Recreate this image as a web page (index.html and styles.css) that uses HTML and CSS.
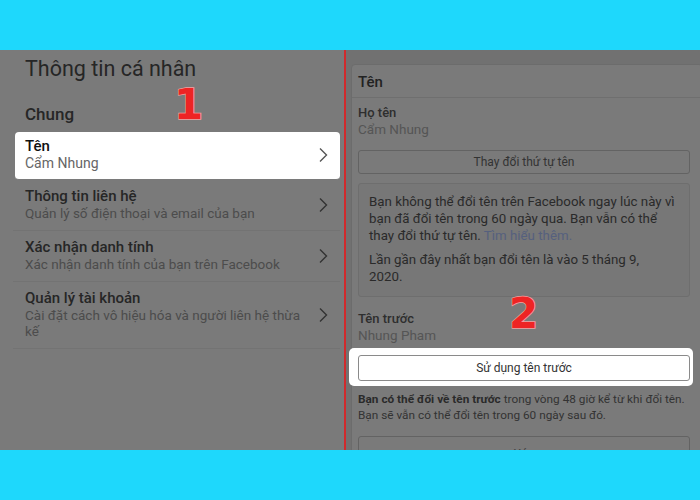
FILE: index.html
```html
<!DOCTYPE html>
<html lang="vi">
<head>
<meta charset="utf-8">
<title>Thông tin cá nhân</title>
<link rel="stylesheet" href="styles.css">
</head>
<body>
<div class="bar"></div>
<main class="screen">
  <section class="left">
    <h1 class="page-title">Thông tin cá nhân</h1>
    <h2 class="section-title">Chung</h2>
    <ul class="menu">
      <li class="menu-item active">
        <div class="item-text">
          <div class="item-title">Tên</div>
          <div class="item-sub">Cẩm Nhung</div>
        </div>
        <svg class="chev" viewBox="0 0 10 16"><path d="M2 1.5 L8.5 8 L2 14.5" fill="none" stroke="currentColor" stroke-width="1.4"/></svg>
      </li>
      <li class="menu-item">
        <div class="item-text">
          <div class="item-title">Thông tin liên hệ</div>
          <div class="item-sub">Quản lý số điện thoại và email của bạn</div>
        </div>
        <svg class="chev" viewBox="0 0 10 16"><path d="M2 1.5 L8.5 8 L2 14.5" fill="none" stroke="currentColor" stroke-width="1.4"/></svg>
      </li>
      <li class="menu-item">
        <div class="item-text">
          <div class="item-title">Xác nhận danh tính</div>
          <div class="item-sub">Xác nhận danh tính của bạn trên Facebook</div>
        </div>
        <svg class="chev" viewBox="0 0 10 16"><path d="M2 1.5 L8.5 8 L2 14.5" fill="none" stroke="currentColor" stroke-width="1.4"/></svg>
      </li>
      <li class="menu-item">
        <div class="item-text">
          <div class="item-title">Quản lý tài khoản</div>
          <div class="item-sub">Cài đặt cách vô hiệu hóa và người liên hệ thừa kế</div>
        </div>
        <svg class="chev" viewBox="0 0 10 16"><path d="M2 1.5 L8.5 8 L2 14.5" fill="none" stroke="currentColor" stroke-width="1.4"/></svg>
      </li>
    </ul>
    <span class="step step-1">1</span>
  </section>
  <section class="right">
    <div class="card">
      <div class="card-head">Tên</div>
      <div class="card-body">
        <div class="field-label">Họ tên</div>
        <div class="field-value">Cẩm Nhung</div>
        <div class="btn">Thay đổi thứ tự tên</div>
        <div class="notice">
          <p>Bạn không thể đổi tên trên Facebook ngay lúc này vì bạn đã đổi tên trong 60 ngày qua. Bạn vẫn có thể thay đổi thứ tự tên. <span class="link">Tìm hiểu thêm.</span></p>
          <p>Lần gần đây nhất bạn đổi tên là vào 5 tháng 9,<br>2020.</p>
        </div>
        <div class="field-label prev">Tên trước</div>
        <div class="field-value">Nhung Pham</div>
        <div class="highlight">
          <div class="btn btn-white">Sử dụng tên trước</div>
        </div>
        <p class="note"><b>Bạn có thể đổi về tên trước</b> trong vòng 48 giờ kể từ khi đổi tên. Bạn sẽ vẫn có thể đổi tên trong 60 ngày sau đó.</p>
        <div class="btn btn-last">Xóa</div>
      </div>
    </div>
    <span class="step step-2">2</span>
  </section>
</main>
<div class="bar"></div>
</body>
</html>
```
FILE: styles.css
```css
* { box-sizing: border-box; }
html, body { margin: 0; padding: 0; }
body {
  width: 700px;
  height: 500px;
  overflow: hidden;
  font-family: Roboto, "Liberation Sans", sans-serif;
  background: #7a7a7a;
}
.bar { height: 50px; background: #1ed8fc; }
.screen {
  height: 400px;
  display: flex;
  overflow: hidden;
}
.left {
  position: relative;
  width: 346px;
  flex: none;
  background: #7a7a7a;
  border-right: 2px solid #d02a2c;
  padding: 6px 4px 0 13px;
}
.page-title {
  margin: 0 0 0 12px;
  font-size: 21.5px;
  line-height: 25px;
  font-weight: 400;
  color: #262626;
}
.section-title {
  margin: 23px 0 0 12px;
  font-size: 17px;
  line-height: 20px;
  font-weight: 500;
  color: #262626;
}
.menu {
  list-style: none;
  margin: 8px 0 0;
  padding: 0;
}
.menu-item {
  display: flex;
  align-items: center;
  padding: 8px 12px 9px 12px;
  border-bottom: 1px solid #737373;
}
.menu-item.active {
  background: #fff;
  border-radius: 4px;
  margin-left: 2px;
  padding: 6px 12px 7px 10px;
  border-bottom: 1px solid #7a7a7a;
  height: 48px;
}
.item-text { flex: 1; }
.item-title {
  font-size: 15px;
  line-height: 17px;
  font-weight: 500;
  color: #262626;
}
.item-sub {
  font-size: 13.5px;
  line-height: 16px;
  color: #4c4c4c;
  padding-right: 8px;
}
.menu-item.active .item-title { color: #111; }
.menu-item.active .item-sub { color: #666; font-size: 14px; line-height: 17px; }
.chev {
  width: 10px;
  height: 16px;
  color: #333;
  flex: none;
}
.menu-item.active .chev { color: #555; }

.step {
  position: absolute;
  font-family: "DejaVu Sans", sans-serif;
  font-weight: 700;
  font-size: 42px;
  line-height: 42px;
  color: #ee2424;
  -webkit-text-stroke: 1.5px #f4a0a0;
  paint-order: stroke fill;
}
.step-1 { left: 174px; top: 34px; }
.step-2 { left: 163px; top: 243px; }

.right {
  position: relative;
  flex: 1;
  background: #717171;
  padding: 14px 0 0 5px;
  overflow: hidden;
}
.card {
  width: 352px;
  background: #7a7a7a;
  border: 1px solid #6c6c6c;
  border-radius: 4px;
}
.card-head {
  height: 33px;
  padding: 8px 6px 0;
  font-size: 15px;
  line-height: 18px;
  font-weight: 500;
  color: #222;
  border-bottom: 1px solid #6f6f6f;
}
.card-body {
  padding: 7px 12px 0 6px;
}
.field-label {
  font-size: 13px;
  line-height: 16px;
  font-weight: 500;
  color: #2e2e2e;
}
.field-value {
  font-size: 13.5px;
  line-height: 17px;
  color: #555;
}
.btn {
  height: 24px;
  margin-top: 12px;
  border: 1px solid #636363;
  border-radius: 3px;
  font-size: 12px;
  line-height: 22px;
  text-align: center;
  color: #333;
}
.notice {
  margin-top: 9px;
  border: 1px solid #6e6e6e;
  border-radius: 3px;
  background: #777;
  padding: 9px 6px 11px 10px;
  font-size: 13.3px;
  line-height: 17px;
  color: #2a2a2a;
}
.notice p { margin: 0; }
.notice p + p { margin-top: 7px; }
.link { color: #55607e; }
.field-label.prev { margin-top: 14px; }
.highlight {
  margin: 4px -3px 0 -9px;
  padding: 7px 3px 5px 9px;
  background: #fff;
  border-radius: 5px;
}
.btn-white {
  margin-top: 0;
  height: 26px;
  line-height: 24px;
  background: #fff;
  border-color: #8a8a8a;
  color: #333;
}
.note {
  margin: 5px 0 0;
  font-size: 11.8px;
  line-height: 16px;
  color: #333;
}
.note b { font-weight: 700; color: #2a2a2a; }
.btn-last { margin-top: 13px; height: 30px; line-height: 34px; color: #444; }
```
